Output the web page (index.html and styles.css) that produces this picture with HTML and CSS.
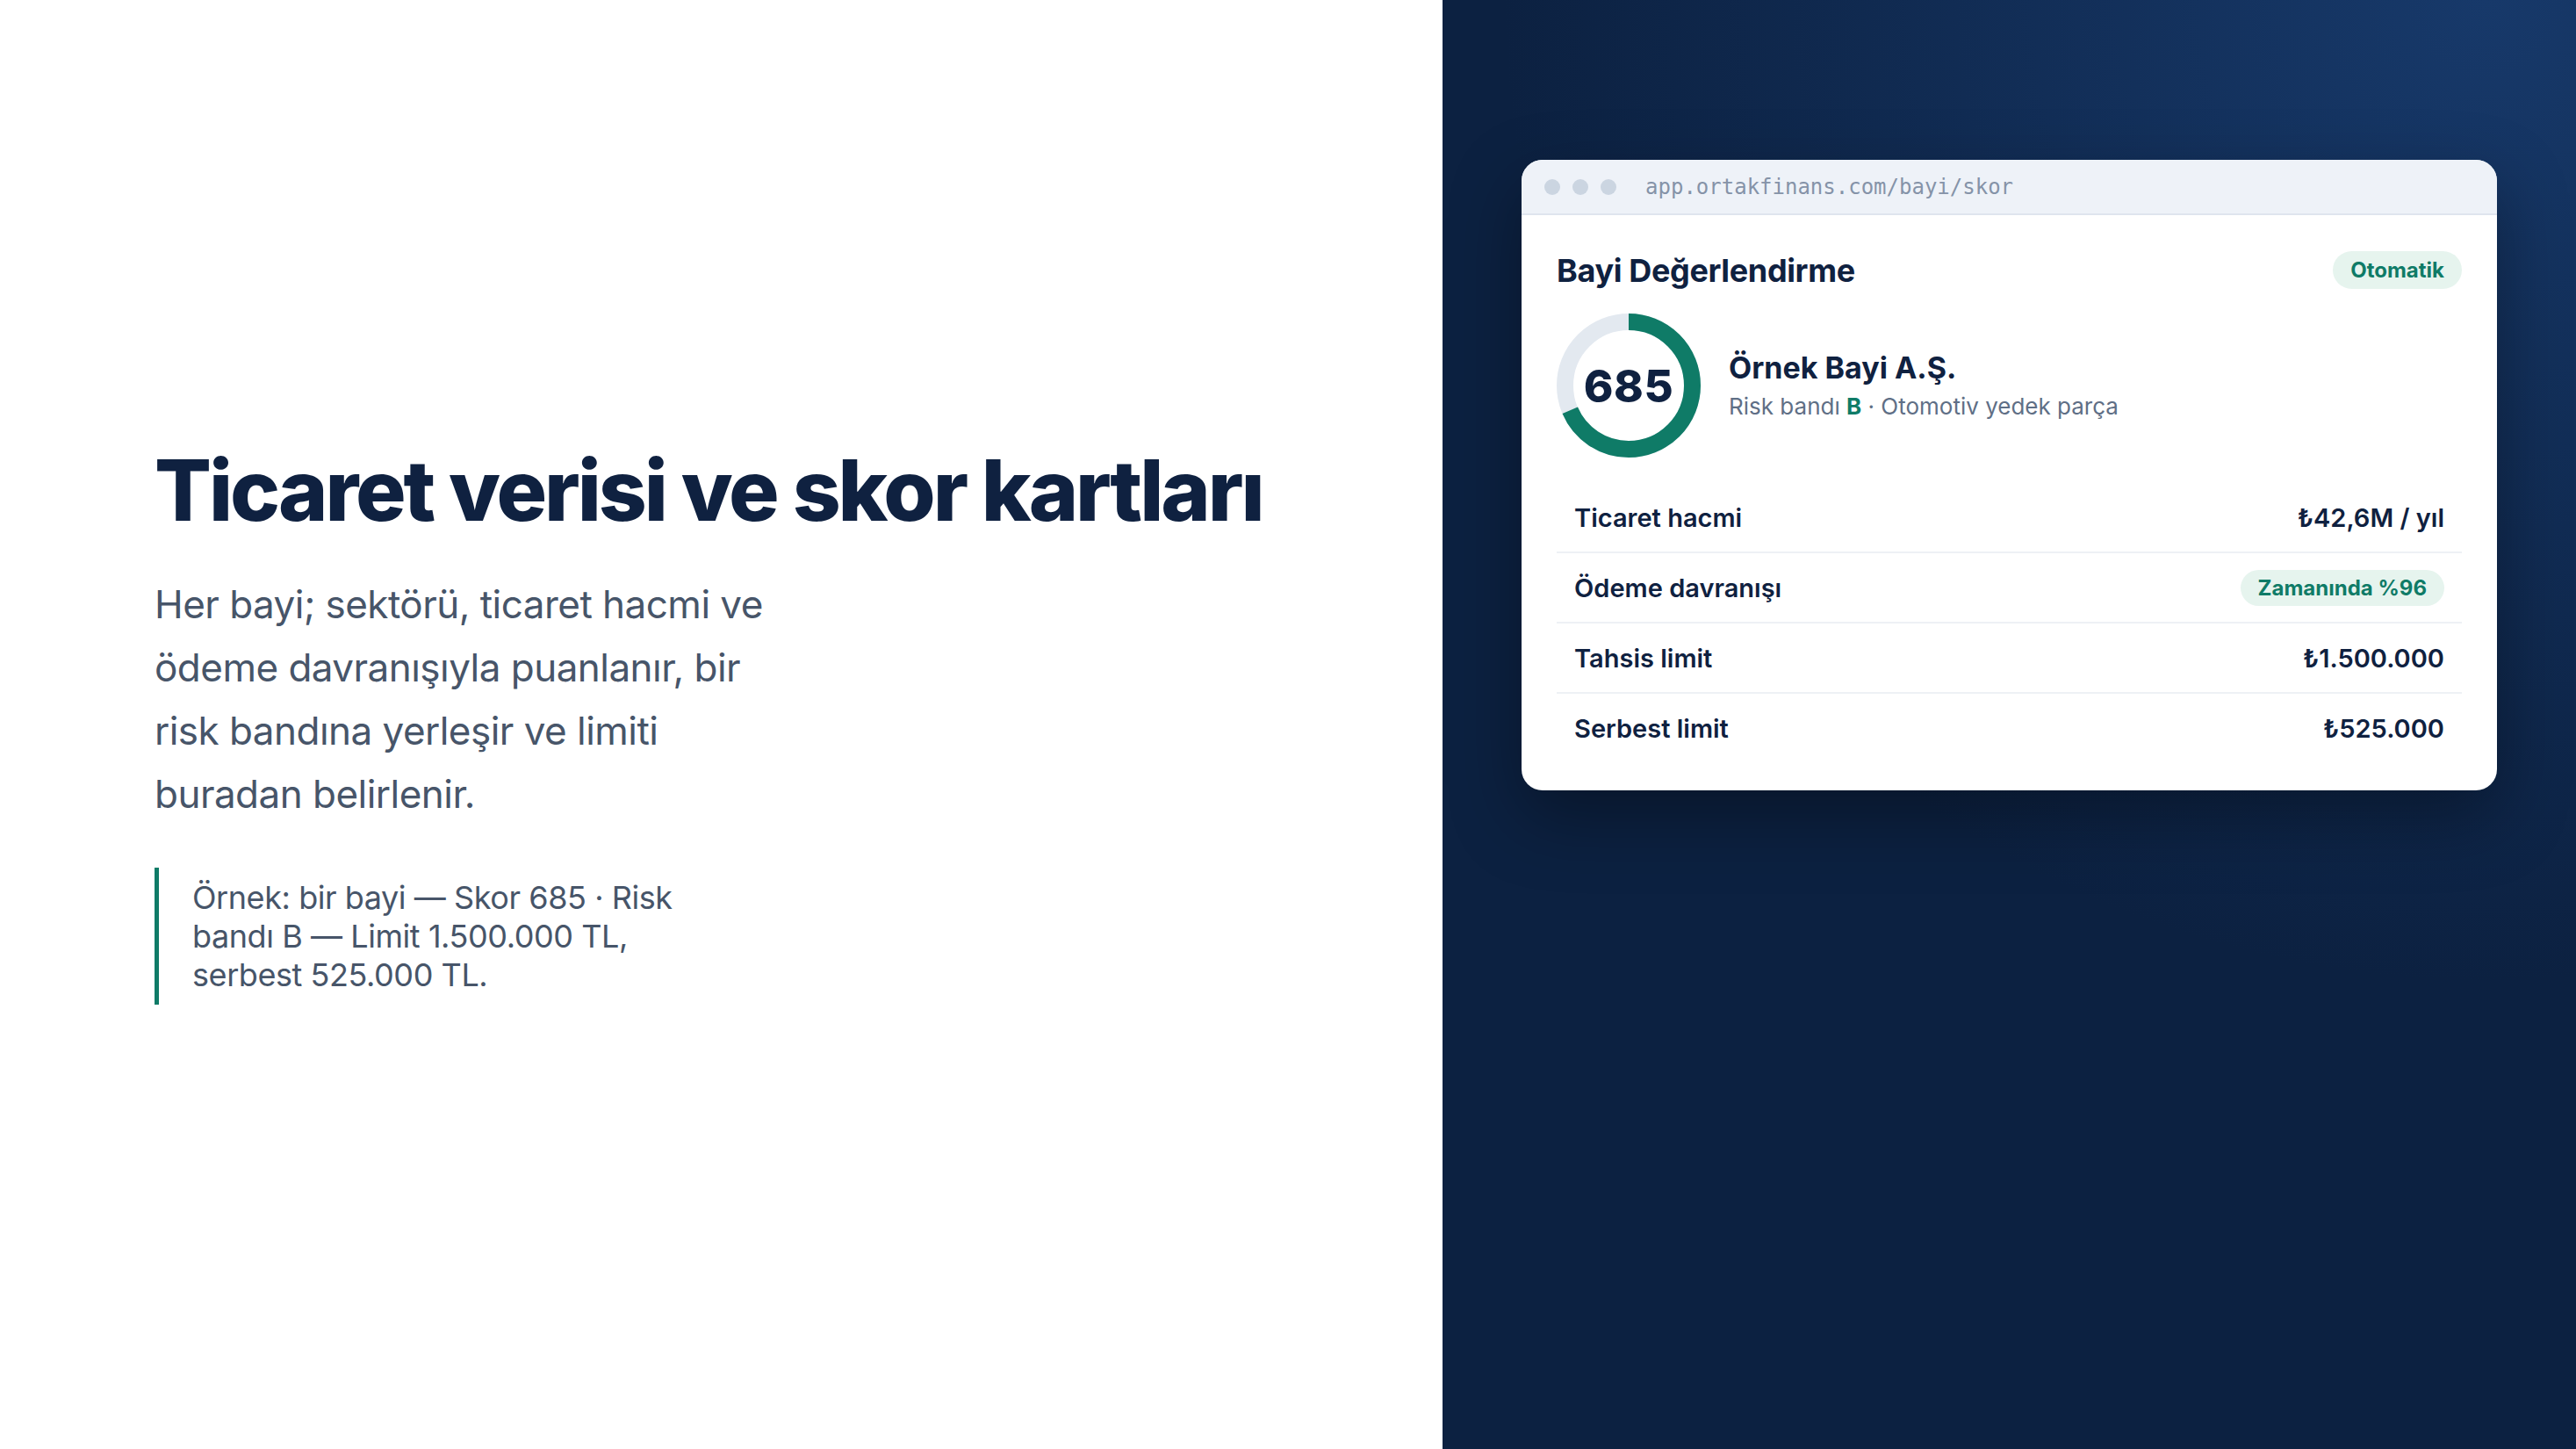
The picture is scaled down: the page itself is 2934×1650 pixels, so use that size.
FILE: index.html
```html
<!DOCTYPE html>
<html lang="tr">
  <head>
    <meta charset="UTF-8" />
    <meta name="viewport" content="width=device-width, initial-scale=1.0" />
    <title>Ticaret verisi ve skor kartları</title>
    <link rel="stylesheet" href="styles.css">
  </head>
  <body>
    <main class="slide">
      <section class="intro">
        <h1 class="intro-title">Ticaret verisi ve skor kartları</h1>
        <p class="intro-lead">Her bayi; sektörü, ticaret hacmi ve ödeme davranışıyla puanlanır, bir risk bandına yerleşir ve limiti buradan belirlenir.</p>
        <blockquote class="intro-example">Örnek: bir bayi — Skor 685 · Risk bandı B — Limit 1.500.000 TL, serbest 525.000 TL.</blockquote>
      </section>

      <section class="showcase">
        <div class="window">
          <div class="window-bar">
            <span class="dot"></span>
            <span class="dot"></span>
            <span class="dot"></span>
            <span class="url">app.ortakfinans.com/bayi/skor</span>
          </div>

          <div class="window-body">
            <header class="card-head">
              <h2 class="card-title">Bayi Değerlendirme</h2>
              <span class="badge">Otomatik</span>
            </header>

            <div class="dealer">
              <div class="gauge">
                <svg class="gauge-ring" width="164" height="164" viewBox="0 0 164 164">
                  <circle class="gauge-track" cx="82" cy="82" r="72.5" />
                  <!-- 685 / 1000 of the circumference (455.5) -->
                  <circle class="gauge-fill" cx="82" cy="82" r="72.5" stroke-dasharray="312 456" transform="rotate(-90 82 82)" />
                </svg>
                <span class="gauge-value">685</span>
              </div>
              <div class="dealer-info">
                <div class="dealer-name">Örnek Bayi A.Ş.</div>
                <div class="dealer-meta">Risk bandı <b>B</b> · Otomotiv yedek parça</div>
              </div>
            </div>

            <ul class="metrics">
              <li class="metric">
                <span class="metric-label">Ticaret hacmi</span>
                <span class="metric-value">₺42,6M / yıl</span>
              </li>
              <li class="metric">
                <span class="metric-label">Ödeme davranışı</span>
                <span class="pill">Zamanında %96</span>
              </li>
              <li class="metric">
                <span class="metric-label">Tahsis limit</span>
                <span class="metric-value">₺1.500.000</span>
              </li>
              <li class="metric">
                <span class="metric-label">Serbest limit</span>
                <span class="metric-value">₺525.000</span>
              </li>
            </ul>
          </div>
        </div>
      </section>
    </main>
  </body>
</html>
```

FILE: styles.css
```css
body {
  margin: 0;
  padding: 0;
  font-family: 'Inter', 'Noto Sans', sans-serif;
  background-color: #ffffff;
  color: #0f2140;
}
.slide {
  display: grid;
  grid-template-columns: 56% 44%;
  height: 100vh;
}

/* left column */
.intro {
  display: flex;
  flex-direction: column;
  justify-content: center;
  padding: 0 176px;
}
.intro-title {
  margin: 0;
  font-size: 96px;
  font-weight: 800;
  line-height: 1.1;
  letter-spacing: -0.032em;
  color: #0f2140;
}
.intro-lead {
  margin: 40px 0 0;
  max-width: 740px;
  font-size: 44px;
  line-height: 72px;
  letter-spacing: -0.012em;
  color: #475569;
}
.intro-example {
  margin: 48px 0 0;
  max-width: 600px;
  padding: 12px 0 12px 38px;
  border-left: 5px solid #0f7b67;
  font-size: 36px;
  line-height: 44px;
  letter-spacing: -0.012em;
  color: #475569;
}

/* right column */
.showcase {
  padding: 182px 90px;
  background:
    radial-gradient(circle at 92% 0%, #17396a 0%, rgba(23, 57, 106, 0) 55%),
    #0c2141;
}
.window {
  background-color: #ffffff;
  border-radius: 24px;
  overflow: hidden;
  box-shadow: 0 30px 80px rgba(0, 0, 0, 0.35);
}
.window-bar {
  display: flex;
  align-items: center;
  gap: 14px;
  height: 61px;
  padding: 0 26px;
  background-color: #eef2f8;
  border-bottom: 2px solid #dfe5ee;
}
.dot {
  width: 18px;
  height: 18px;
  border-radius: 50%;
  background-color: #cbd5e1;
}
.url {
  margin-left: 19px;
  font-family: 'DejaVu Sans Mono', monospace;
  font-size: 24px;
  color: #8593a8;
}
.window-body {
  padding: 41px 40px 32px;
}
.card-head {
  display: flex;
  align-items: center;
  justify-content: space-between;
}
.card-title {
  margin: 0;
  font-size: 36px;
  font-weight: 700;
  line-height: 40px;
  letter-spacing: -0.01em;
}
.badge,
.pill {
  display: inline-flex;
  align-items: center;
  height: 43px;
  padding: 0 20px;
  border-radius: 999px;
  background-color: #e6f4ee;
  color: #0f7b67;
  font-size: 24px;
  font-weight: 700;
}
.pill {
  height: 41px;
}
.dealer {
  display: flex;
  align-items: center;
  gap: 32px;
  margin-top: 28px;
}
.gauge {
  display: grid;
  place-items: center;
  width: 164px;
  height: 164px;
}
.gauge-ring,
.gauge-value {
  grid-area: 1 / 1;
}
.gauge-track {
  fill: none;
  stroke: #e3e9f0;
  stroke-width: 19;
}
.gauge-fill {
  fill: none;
  stroke: #0f7b67;
  stroke-width: 19;
}
.gauge-value {
  font-size: 51px;
  font-weight: 800;
  letter-spacing: 0.01em;
}
.dealer-name {
  font-size: 34px;
  font-weight: 700;
  line-height: 38px;
}
.dealer-meta {
  margin-top: 9px;
  font-size: 26px;
  line-height: 32px;
  color: #5f6f86;
}
.dealer-meta b {
  color: #0f7b67;
}
.metrics {
  margin: 29px 0 0;
  padding: 0;
  list-style: none;
}
.metric {
  display: flex;
  align-items: center;
  justify-content: space-between;
  min-height: 78px;
  padding: 0 20px;
  font-size: 29px;
  font-weight: 600;
}
.metric + .metric {
  border-top: 2px solid #eef1f5;
}
```
